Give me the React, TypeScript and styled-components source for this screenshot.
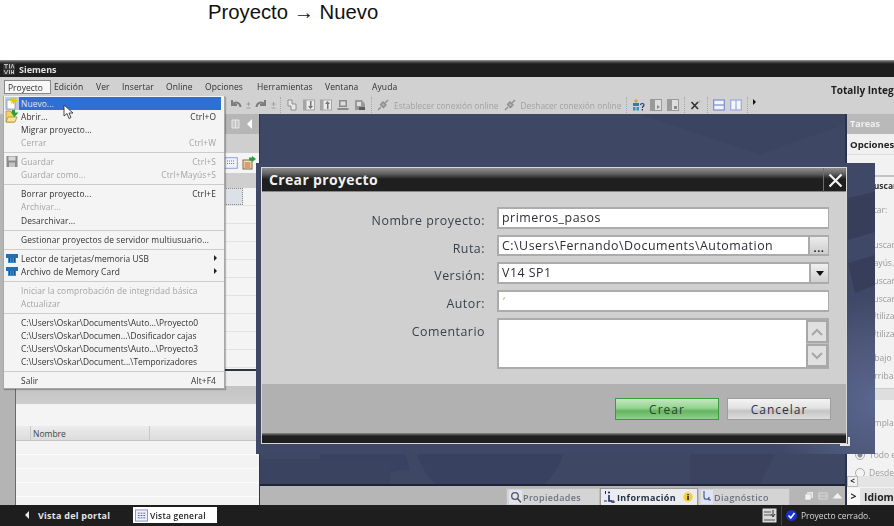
import React from "react";
import styled, { createGlobalStyle } from "styled-components";

const Global = createGlobalStyle`
  html, body { margin: 0; padding: 0; background: #fff; }
  body { width: 894px; height: 526px; overflow: hidden; font-family: "Open Sans", "Noto Sans", sans-serif; }
  * { box-sizing: border-box; }
`;

const Page = styled.div`
  position: relative;
  width: 894px;
  height: 526px;
  overflow: hidden;
  display: flex;
  flex-direction: column;
`;
const Caption = styled.div`
  height: 60px;
  padding: 0 0 0 208px;
  font: 20.3px/24px "Liberation Sans", Arial, sans-serif;
  color: #111;
`;
const Window = styled.div`
  position: relative;
  flex: 1;
  display: flex;
  flex-direction: column;
  min-height: 0;
  filter: blur(0.3px);
`;
const TitleBar = styled.div`
  height: 17px;
  display: flex;
  align-items: center;
  gap: 4px;
  padding: 1px 0 0 3px;
  background: linear-gradient(#9a9a9a 0, #4a4a4a 2px, #1e1e1e 4px, #1e1e1e 100%);
  color: #e2e2e2;
  font-size: 9px;
  font-weight: 700;
`;
const MenuBar = styled.div`
  height: 19px;
  display: flex;
  align-items: center;
  background: #d1d1d1;
  position: relative;
`;
const MenuEntry = styled.div<{ $x: number; $open?: boolean }>`
  position: absolute;
  left: ${(p) => p.$x}px;
  top: 3px;
  height: 14px;
  line-height: 14px;
  padding: 0 ${(p) => (p.$open ? 3 : 0)}px;
  font-size: 8.5px;
  letter-spacing: 0.1px;
  color: #303030;
  ${(p) => p.$open && "background:#f7f7f7;border:1px solid #888;width:47px;line-height:13px;letter-spacing:0;"}
`;
const BrandLine = styled.div`
  position: absolute;
  right: 0;
  top: 6px;
  width: 63px;
  overflow: hidden;
  white-space: nowrap;
  font-size: 10px;
  font-weight: 700;
  color: #1d1d1d;
`;
const ToolBar = styled.div`
  height: 18px;
  display: flex;
  align-items: center;
  gap: 5px;
  padding: 0 0 0 230px;
  background: #d1d1d1;
  color: #a2a2a2;
  font-size: 8.4px;
  white-space: nowrap;
`;
const ToolSep = styled.div`
  width: 1px;
  height: 16px;
  border-left: 1px dotted #a8a8a8;
`;
const ToolArrow = styled.div`
  width: 0;
  height: 0;
  margin: -6px 0 0 0;
  border-left: 3px solid #111;
  border-top: 3px solid transparent;
  border-bottom: 3px solid transparent;
`;
const Workspace = styled.div`
  flex: 1;
  display: flex;
  min-height: 0;
`;
const LeftRail = styled.div`
  width: 16px;
  background: #b4b4b4;
  border-right: 1px solid #6a6a6a;
`;
const LeftPanel = styled.div`
  width: 244px;
  display: flex;
  flex-direction: column;
  border-right: 1px solid #2f364d;
  background: #f3f3f3;
`;
const PanelHead = styled.div`
  height: 20px;
  display: flex;
  align-items: center;
  justify-content: flex-end;
  gap: 7px;
  padding-right: 7px;
  background: #b6b6b6;
`;
const PanelBand = styled.div<{ $h: number; $bg: string }>`
  height: ${(p) => p.$h}px;
  background: ${(p) => p.$bg};
`;
const PanelTools = styled.div`
  height: 20px;
  display: flex;
  align-items: center;
  justify-content: flex-end;
  gap: 4px;
  padding-right: 3px;
  background: #f4f4f4;
`;
const Collapse = styled.div`
  width: 0;
  height: 0;
  border-right: 5px solid #fff;
  border-top: 5px solid transparent;
  border-bottom: 5px solid transparent;
`;
const Tree = styled.div`
  height: 183px;
  background: repeating-linear-gradient(#f4f4f4 0, #f4f4f4 17px, #e2e2e2 17px, #e2e2e2 18px);
  position: relative;
  border-bottom: 2px solid #2f3336;
`;
const TreeSelected = styled.div`
  height: 17px;
  background: #dbe1e6;
  border-top: 1px dotted #8a8a8a;
  border-bottom: 1px dotted #8a8a8a;
  border-right: 1px dotted #8a8a8a;
  margin-right: 16px;
`;
const ColHead = styled.div`
  height: 15px;
  display: flex;
  background: linear-gradient(#ececec, #dcdcdc);
  border-bottom: 1px solid #c4c4c4;
  font-size: 8.5px;
  line-height: 15px;
  color: #444;
`;
const ColCell = styled.div<{ $w: number }>`
  width: ${(p) => p.$w}px;
  padding-left: 2px;
  border-right: 1px solid #c8c8c8;
`;
const ListRows = styled.div`
  flex: 1;
  background: repeating-linear-gradient(#f3f3f3 0, #f3f3f3 13px, #fcfcfc 13px, #fcfcfc 14px);
`;
const Center = styled.div`
  flex: 1;
  display: flex;
  flex-direction: column;
  min-width: 0;
`;
const Canvas = styled.div`
  flex: 1;
  position: relative;
  overflow: hidden;
  background: #3e4764;
  border-bottom: 2px solid #1f2438;
`;
const CanvasArt = styled.svg`
  position: absolute;
  inset: 0;
  width: 100%;
  height: 100%;
`;
const TabBar = styled.div`
  height: 19px;
  display: flex;
  align-items: flex-end;
  padding-left: 246px;
  background: #b6b6b6;
`;
const Tab = styled.div<{ $w: number; $active?: boolean }>`
  width: ${(p) => p.$w}px;
  height: 17px;
  display: flex;
  align-items: center;
  gap: 1px;
  padding-left: 2px;
  background: ${(p) => (p.$active ? "#ececec" : "#d4d4d4")};
  border: 1px solid ${(p) => (p.$active ? "#9a9a9a" : "#bdbdbd")};
  border-bottom: 0;
  font-size: 9px;
  font-weight: ${(p) => (p.$active ? 700 : 600)};
  letter-spacing: 0.35px;
  color: ${(p) => (p.$active ? "#23324a" : "#6d7280")};
  white-space: nowrap;
`;
const TabTools = styled.div`
  display: flex;
  align-items: center;
  gap: 4px;
  padding: 0 0 4px 14px;
`;
const RightPanel = styled.div`
  width: 49px;
  display: flex;
  flex-direction: column;
  background: #f2f2f2;
  border-left: 2px solid #2c324a;
  overflow: hidden;
  white-space: nowrap;
  font-size: 8.5px;
  color: #999;
`;
const TasksHead = styled.div`
  height: 20px;
  padding-left: 3px;
  background: #b9b9b9;
  color: #f0f0f0;
  font-size: 9px;
  font-weight: 700;
  line-height: 19px;
`;
const OptionsHead = styled.div`
  height: 21px;
  padding-left: 3px;
  background: #f0f0f0;
  border-bottom: 1px solid #ddd;
  color: #222;
  font-size: 9.6px;
  font-weight: 700;
  line-height: 22px;
`;
const SearchHead = styled.div`
  margin-top: 20px;
  height: 20px;
  padding-left: 21px;
  border-top: 2px solid #c4c4c4;
  color: #333;
  font-weight: 700;
  line-height: 17px;
`;
const PaneRow = styled.div<{ $h: number; $inset: number; $top?: number }>`
  height: ${(p) => p.$h}px;
  margin-top: ${(p) => p.$top ?? 0}px;
  padding-left: ${(p) => p.$inset}px;
  line-height: ${(p) => p.$h}px;
`;
const PaneBlock = styled.div`
  height: 12px;
  margin-top: 5px;
  background: #dedede;
  border-top: 1px solid #ccc;
`;
const RadioRow = styled.div<{ $h: number }>`
  height: ${(p) => p.$h}px;
  display: flex;
  align-items: flex-start;
  gap: 4px;
  padding: 4px 0 0 8px;
  line-height: 10px;
`;
const Radio = styled.div<{ $on?: boolean }>`
  width: 10px;
  height: 10px;
  flex: none;
  border-radius: 50%;
  border: 1px solid #aaa;
  background: ${(p) => (p.$on ? "radial-gradient(#888 0 2px, #f4f4f4 3px)" : "#f4f4f4")};
`;
const PaneScroll = styled.div`
  height: 11px;
  display: flex;
  background: #e4e4e4;
`;
const ScrollBtn = styled.div`
  width: 11px;
  flex: none;
  border: 1px solid #bbb;
  background: #f2f2f2;
  color: #222;
  font-size: 8px;
  font-weight: 700;
  line-height: 8px;
  text-align: center;
`;
const LangRow = styled.div`
  height: 17px;
  display: flex;
  align-items: center;
  gap: 4px;
  margin-top: 1px;
  background: #e2e2e2;
  color: #222;
  font-size: 10.4px;
  font-weight: 700;
`;
const LangBtn = styled.div`
  width: 13px;
  height: 17px;
  flex: none;
  background: #f7f7f7;
  text-align: center;
  line-height: 16px;
`;
const StatusBar = styled.div`
  height: 21px;
  display: flex;
  align-items: center;
  background: #1e1e1e;
  color: #e4e4e4;
  font-size: 8.5px;
  padding-bottom: 1px;
`;
const PortalLink = styled.div`
  display: flex;
  align-items: center;
  gap: 9px;
  padding-left: 25px;
  width: 133px;
  font-size: 9px;
  font-weight: 700;
  letter-spacing: 0.25px;
`;
const PortalArrow = styled.div`
  width: 0;
  height: 0;
  border-right: 4px solid #e8e8e8;
  border-top: 4px solid transparent;
  border-bottom: 4px solid transparent;
`;
const OverviewBtn = styled.div`
  width: 84px;
  height: 16px;
  display: flex;
  align-items: center;
  gap: 2px;
  padding-left: 2px;
  background: #fff;
  color: #222;
  font-weight: 600;
  letter-spacing: 0.2px;
`;
const StatusRight = styled.div`
  margin-left: auto;
  display: flex;
  align-items: center;
  gap: 4px;
  width: 132px;
  letter-spacing: -0.05px;
  color: #d8d8d8;
`;
const StatusDiv = styled.div`
  width: 1px;
  height: 19px;
  background: #444;
`;
const Menu = styled.div`
  position: absolute;
  left: 3px;
  top: 36px;
  width: 222px;
  height: 293px;
  padding: 1px 3px 0 2px;
  background: #f4f4f4;
  border: 1px solid #a8a8a8;
  border-top: 0;
  box-shadow: 1px 1px 1px rgba(0, 0, 0, 0.25);
  font-size: 8.4px;
  letter-spacing: 0.1px;
  color: #303030;
  white-space: nowrap;
  z-index: 3;
`;
const MenuRow = styled.div<{ $off?: boolean; $hot?: boolean; $path?: boolean }>`
  position: relative;
  height: 13.1px;
  display: flex;
  align-items: center;
  justify-content: space-between;
  padding: 0 5px 0 15px;
  margin-left: ${(p) => (p.$hot ? "13px" : "0")};
  ${(p) => p.$path && "letter-spacing:0;"}
  ${(p) => p.$hot && "padding-left:2px;background:#2f6fd3;color:#dfe8f5;"}
  ${(p) => p.$off && "color:#a3a3a3;"}
`;
const RowIcon = styled.svg<{ $hot?: boolean }>`
  position: absolute;
  left: ${(p) => (p.$hot ? "-14px" : "-1px")};
  top: 0;
  width: 14px;
  height: 13px;
`;
const SubArrow = styled.span`
  width: 0;
  height: 0;
  margin-right: -1px;
  border-left: 3px solid #222;
  border-top: 3px solid transparent;
  border-bottom: 3px solid transparent;
`;
const MenuSep = styled.div`
  height: 1px;
  margin: 3px -3px 1.9px -2px;
  background: #cdcdcd;
`;
const Pointer = styled.svg`
  position: absolute;
  left: 63px;
  top: 44px;
  width: 11px;
  height: 16px;
  z-index: 4;
`;
const Backdrop = styled.div`
  position: absolute;
  left: 256px;
  top: 103px;
  width: 619px;
  height: 291px;
  padding: 4px 0 0 5px;
  background: radial-gradient(circle at 100% 82%, #5b668f 0, #4d5779 60px, #3f4866 105px);
  z-index: 2;
`;
const BackdropArt = styled.svg`
  position: absolute;
  inset: 0;
  width: 100%;
  height: 100%;
`;
const Dialog = styled.div`
  position: relative;
  width: 586px;
  height: 277px;
  display: flex;
  flex-direction: column;
  background: #d0d0d0;
  border: 1px solid #d8d8d8;
`;
const DialogTitle = styled.div`
  height: 24px;
  display: flex;
  justify-content: space-between;
  padding: 2px 0 0 7px;
  background: linear-gradient(#8f8f8f 0, #5e5e5e 6px, #1f1f1f 11px, #1f1f1f 100%);
  border-bottom: 1px solid #888;
  color: #f0f0f0;
  font-size: 14px;
  font-weight: 700;
  letter-spacing: 0.35px;
  line-height: 19px;
`;
const CloseBtn = styled.div`
  width: 23px;
  margin-top: -2px;
  height: 24px;
  display: flex;
  align-items: center;
  justify-content: center;
  border-left: 1px solid #6c6c6c;
`;
const Form = styled.div`
  flex: 1;
  display: grid;
  grid-template-columns: 223px 332px;
  grid-template-rows: 22px 21px 22px 22px 51px;
  column-gap: 12px;
  row-gap: 6px;
  padding-top: 15px;
  font-size: 12.4px;
  letter-spacing: 0.5px;
`;
const Label = styled.div`
  text-align: right;
  color: #3a3f4a;
  line-height: 28px;
`;
const Field = styled.div`
  display: flex;
  justify-content: space-between;
  background: #fff;
  border: 2px solid #ababab;
  border-right-width: 1px;
  padding-left: 3px;
  color: #2d2d38;
  line-height: 18px;
  overflow: hidden;
`;
const Squiggle = styled.span`
  color: #c59a6a;
  font-size: 11px;
  padding-left: 1px;
`;
const DotsBtn = styled.div`
  width: 20px;
  height: 21px;
  margin-top: -2px;
  background: linear-gradient(#f0f0f0, #c9c9c9);
  border-left: 2px solid #ababab;
  color: #222;
  font-size: 11px;
  font-weight: 700;
  line-height: 26px;
  text-align: center;
`;
const DropBtn = styled.div`
  width: 19px;
  display: flex;
  align-items: center;
  justify-content: center;
  background: linear-gradient(#f0f0f0, #cfcfcf);
  border-left: 2px solid #ababab;
`;
const DropArrow = styled.div`
  width: 0;
  height: 0;
  border-top: 5px solid #111;
  border-left: 4px solid transparent;
  border-right: 4px solid transparent;
`;
const CommentBox = styled.div`
  display: flex;
  justify-content: flex-end;
  background: #fff;
  border: 2px solid #ababab;
  border-right-width: 1px;
`;
const ScrollCol = styled.div`
  width: 22px;
  display: flex;
  flex-direction: column;
  justify-content: space-between;
  background: #c2c2c2;
`;
const ScrollArrow = styled.div`
  height: 23px;
  display: flex;
  align-items: center;
  justify-content: center;
  background: #e0e0e0;
  border: 2px solid #a8a8a8;
`;
const Footer = styled.div`
  height: 49px;
  display: flex;
  justify-content: flex-end;
  gap: 8px;
  padding: 14px 15px 0 0;
  background: #b1b1b1;
`;
const Btn = styled.div<{ $primary?: boolean }>`
  width: 104px;
  height: 22px;
  text-align: center;
  font-size: 12px;
  letter-spacing: 1px;
  line-height: 21px;
  color: ${(p) => (p.$primary ? "#26452c" : "#2a3348")};
  border: 1px solid ${(p) => (p.$primary ? "#3c9a3c" : "#9d9d9d")};
  background: ${(p) =>
    p.$primary
      ? "linear-gradient(#c4e8c0 0, #93d48f 45%, #62b560 60%, #8fd08c 100%)"
      : "linear-gradient(#f4f4f4 0, #e2e2e2 45%, #c4c4c4 60%, #dedede 100%)"};
`;
const DialogEdge = styled.div`
  height: 10px;
  background: linear-gradient(#8a8a8a 0, #1f1f1f 3px, #1f1f1f 100%);
`;
const Grip = styled.div`
  position: absolute;
  right: -4px;
  bottom: -3px;
  width: 10px;
  height: 9px;
  border-right: 2px solid #e6e6e6;
  border-bottom: 2px solid #e6e6e6;
`;
const TinySign = styled.svg`
  width: 7px;
  height: 12px;
  margin: 0 -2px;
  flex: none;
`;

const Ic = styled.svg<{ $w?: number; $h?: number }>`
  width: ${(p) => p.$w ?? 12}px;
  height: ${(p) => p.$h ?? 12}px;
  flex: none;
`;

const Undo = ({ flip }: { flip?: boolean }) => (
  <Ic viewBox="0 0 12 12" style={flip ? { transform: "scaleX(-1)" } : undefined}>
    <path d="M2 1v5h5M2.5 5.5C5 2.5 10 3 10.5 8" fill="none" stroke="#7d7d7d" strokeWidth="2" />
  </Ic>
);
const PlusMinus = () => (
  <TinySign viewBox="0 0 7 12">
    <path d="M3.5 3v4M1.5 5h4M1.5 9h4" stroke="#a0a0a0" strokeWidth="1" />
  </TinySign>
);
const Doc = () => (
  <Ic viewBox="0 0 12 12">
    <path d="M2 1h4v4h4v6H5V7H2z" fill="#e8e8e8" stroke="#8f8f8f" />
  </Ic>
);
const ArrowBox = ({ up }: { up?: boolean }) => (
  <Ic viewBox="0 0 12 12">
    <rect x="0.5" y="1" width="11" height="10" fill="#eaeaea" stroke="#a5a5a5" />
    <rect x="0.5" y="1" width="3" height="10" fill="#a5a5a5" />
    <path d={up ? "M7.5 2 5 5h2v5h1.5V5H10z" : "M7.5 10 5 7h2V2h1.5v5H10z"} fill="#777" />
  </Ic>
);
const Screen = () => (
  <Ic viewBox="0 0 12 12">
    <rect x="2" y="1" width="8" height="7" fill="#8b8b8b" />
    <rect x="3.5" y="2.5" width="5" height="4" fill="#dcdcdc" />
    <rect x="0.5" y="9" width="11" height="2" fill="#8b8b8b" />
  </Ic>
);
const Rt = () => (
  <Ic viewBox="0 0 12 12">
    <path d="M1 1h7l3 4v6H1z" fill="#9a9a9a" />
    <path d="M3 3h4v4H3z" fill="#dedede" />
    <path d="M5 8h6v3H5z" fill="#5d5d5d" />
  </Ic>
);
const Plug = () => (
  <Ic viewBox="0 0 12 12">
    <path d="M1 11 4 8M8 4l3-3M3.5 5.5 6.5 8.5 9 6 6 3z" fill="#b0b0b0" stroke="#8d8d8d" strokeWidth="1.3" />
  </Ic>
);
const Persons = () => (
  <Ic $w={13} viewBox="0 0 13 12">
    <circle cx="4" cy="2" r="1.7" fill="#e0a13a" />
    <rect x="1" y="4" width="6" height="3" fill="#2d7fb8" />
    <rect x="1" y="8" width="2.5" height="3.5" fill="#3d8ec8" />
    <rect x="4.5" y="8" width="2.5" height="3.5" fill="#3d8ec8" />
    <path d="M8.5 6c0-2 3.5-2 3.5 0 0 1.3-1.7 1.3-1.7 3" fill="none" stroke="#223b66" strokeWidth="1.2" />
    <rect x="9.7" y="10" width="1.3" height="1.5" fill="#223b66" />
  </Ic>
);
const SplitDoc = ({ sq }: { sq?: boolean }) => (
  <Ic viewBox="0 0 12 12">
    <rect x="0.5" y="0.5" width="11" height="11" fill="#dedede" stroke="#9a9a9a" />
    <rect x="1" y="1" width="4" height="10" fill="#9a9a9a" />
    {sq ? <rect x="7" y="7" width="3" height="3" fill="#8a8a8a" /> : <path d="M7 6l3 2-3 2z" fill="#8a8a8a" />}
  </Ic>
);
const CrossTool = () => (
  <Ic viewBox="0 0 12 12">
    <path d="M1.5 3 8 10M8 3 1.5 10" stroke="#333" strokeWidth="1.6" />
    <path d="M9.5 1v3M8 2.5h3" stroke="#bbb" strokeWidth="1" />
  </Ic>
);
const SplitH = () => (
  <Ic viewBox="0 0 12 12">
    <rect x="0.7" y="1" width="10.6" height="10" fill="#f2f4fb" stroke="#7a8cd2" strokeWidth="1.2" />
    <path d="M1 6h10" stroke="#7a8cd2" strokeWidth="1.2" />
  </Ic>
);
const SplitV = () => (
  <Ic viewBox="0 0 12 12">
    <rect x="0.7" y="1" width="10.6" height="10" fill="#f2f4fb" stroke="#9aa8de" strokeWidth="1.2" />
    <path d="M6 1v10" stroke="#9aa8de" strokeWidth="1.2" />
  </Ic>
);
const Chip = () => (
  <>
    <rect x="1" y="2" width="12" height="4" fill="#1f6fb2" />
    <rect x="3" y="6" width="8" height="5" fill="#3b8fd0" />
    <path d="M4.5 6v4M7 6v4M9.500 6v4" stroke="#0d3f6b" strokeWidth="0.8" />
  </>
);
const TableIcon = () => (
  <Ic $w={13} $h={13} viewBox="0 0 14 13">
    <rect x="0.5" y="0.5" width="13" height="12" fill="#eef1fa" stroke="#7d8fcf" />
    <path d="M3 4h8M3 6.5h8M3 9h8" stroke="#4b5b8c" strokeDasharray="2 1" />
  </Ic>
);
const InfoTab = () => (
  <Ic $w={13} $h={14} viewBox="0 0 13 14">
    <rect x="0.5" y="0.5" width="12" height="13" fill="#e9ecf8" />
    <path d="M6 5v6h3" fill="none" stroke="#1c2b55" strokeWidth="1.6" />
    <circle cx="6" cy="2.5" r="1.1" fill="#1c2b55" />
    <path d="M1 11h3M2.5 1v3M10 10v3M8 12h4" stroke="#1c2b55" />
  </Ic>
);

type Item = { t: string; k?: string; off?: boolean; hot?: boolean; sub?: boolean; icon?: string; path?: boolean };
const menuData: Item[][] = [
  [
    { t: "Nuevo...", hot: true, icon: "new" },
    { t: "Abrir...", k: "Ctrl+O", icon: "open" },
    { t: "Migrar proyecto..." },
    { t: "Cerrar", k: "Ctrl+W", off: true },
  ],
  [
    { t: "Guardar", k: "Ctrl+S", off: true, icon: "save" },
    { t: "Guardar como...", k: "Ctrl+Mayús+S", off: true },
  ],
  [
    { t: "Borrar proyecto...", k: "Ctrl+E" },
    { t: "Archivar...", off: true },
    { t: "Desarchivar..." },
  ],
  [{ t: "Gestionar proyectos de servidor multiusuario..." }],
  [
    { t: "Lector de tarjetas/memoria USB", sub: true, icon: "chip" },
    { t: "Archivo de Memory Card", sub: true, icon: "chip" },
  ],
  [
    { t: "Iniciar la comprobación de integridad básica", off: true },
    { t: "Actualizar", off: true },
  ],
  [
    { t: "C:\\Users\\Oskar\\Documents\\Auto...\\Proyecto0", path: true },
    { t: "C:\\Users\\Oskar\\Documen...\\Dosificador cajas", path: true },
    { t: "C:\\Users\\Oskar\\Documents\\Auto...\\Proyecto3", path: true },
    { t: "C:\\Users\\Oskar\\Document...\\Temporizadores", path: true },
  ],
  [{ t: "Salir", k: "Alt+F4" }],
];

const menuBar: [string, number][] = [
  ["Edición", 54],
  ["Ver", 96],
  ["Insertar", 122],
  ["Online", 166],
  ["Opciones", 205],
  ["Herramientas", 257],
  ["Ventana", 325],
  ["Ayuda", 372],
];

const MenuIconArt = ({ kind }: { kind?: string }) => {
  if (kind === "new")
    return (
      <>
        <rect x="0" y="0" width="14" height="13" fill="#b9cbee" />
        <rect x="2" y="3" width="8" height="9" fill="#fff" stroke="#8a8a8a" strokeWidth="0.7" />
        <path d="M8.500 0v7M5 3.500h7M6 1l5 5M11 1 6 6" stroke="#e0cb10" strokeWidth="1.200" />
      </>
    );
  if (kind === "open")
    return (
      <>
        <path d="M1 1h5l1 2h2v9H1z" fill="#f0d469" stroke="#a88f2a" strokeWidth="0.8" />
        <path d="M1 12l2-5h9l-2 5z" fill="#f7e69c" stroke="#a88f2a" strokeWidth="0.8" />
        <path d="M7 0h3v2.500h3.500L9.500 7 6 2.500h1z" fill="#2d9c3a" />
      </>
    );
  if (kind === "save")
    return (
      <>
        <rect x="1.500" y="1" width="11" height="11" fill="#8c8c8c" />
        <rect x="3.500" y="1.500" width="7" height="4" fill="#d8d8d8" />
        <rect x="4" y="7.500" width="6" height="4.500" fill="#c4c4c4" />
      </>
    );
  return <Chip />;
};

export default function App() {
  return (
    <Page>
      <Global />
      <Caption>Proyecto → Nuevo</Caption>
      <Window>
        <TitleBar>
          <Ic $w={12} $h={12} viewBox="0 0 12 12">
            <rect width="12" height="12" fill="#333" />
            <path d="M1 1.500h4M3 1.500v4M6.500 1v4.500M8 5.500 9.500 1 11 5.500M1 7l2 4 2-4M6.500 7v4M8.500 7v4M8.500 9.500h2.500M10.500 7v4" stroke="#cfcfcf" strokeWidth="0.9" fill="none" />
          </Ic>
          Siemens
        </TitleBar>
        <MenuBar>
          <MenuEntry $x={4} $open>Proyecto</MenuEntry>
          {menuBar.map(([t, x]) => (
            <MenuEntry key={t} $x={x}>{t}</MenuEntry>
          ))}
          <BrandLine>Totally Integrated Automation</BrandLine>
        </MenuBar>
        <ToolBar>
          <Undo />
          <PlusMinus />
          <Undo flip />
          <PlusMinus />
          <ToolSep />
          <Doc />
          <ArrowBox />
          <ArrowBox up />
          <Screen />
          <Rt />
          <ToolSep />
          <Plug />
          Establecer conexión online
          <Plug />
          Deshacer conexión online
          <ToolSep />
          <Persons />
          <SplitDoc />
          <SplitDoc sq />
          <ToolSep />
          <CrossTool />
          <ToolSep />
          <SplitH />
          <SplitV />
          <ToolSep />
          <ToolArrow />
        </ToolBar>
        <Workspace>
          <LeftRail />
          <LeftPanel>
            <PanelHead>
              <Ic $w={9} $h={10} viewBox="0 0 9 10">
                <path d="M1 1h7v8H1zM4.500 1v8" fill="#c8c8c8" stroke="#e6e6e6" />
              </Ic>
              <Collapse />
            </PanelHead>
            <PanelBand $h={19} $bg="#cfcfcf" />
            <PanelTools>
              <Ic $w={14} $h={14} viewBox="0 0 14 14">
                <rect x="0.7" y="1.700" width="12.600" height="10.600" fill="#f1f3fb" stroke="#8fa0dc" />
                <path d="M3 5h8M3 7.500h8" stroke="#777" strokeDasharray="1 1" />
              </Ic>
              <Ic $w={14} $h={14} viewBox="0 0 14 14">
                <rect x="1" y="4" width="9" height="9" fill="#f1e3c0" stroke="#7a6a3a" />
                <path d="M2.500 7h6M2.500 9h6M2.500 11h6" stroke="#c0572e" />
                <path d="M7 1.500h3V0l4 3-4 3V4.500H7z" fill="#2d9c3a" />
              </Ic>
            </PanelTools>
            <PanelBand $h={15} $bg="#cfcfcf" />
            <Tree>
              <TreeSelected />
            </Tree>
            <PanelBand $h={15} $bg="#ededed" />
            <PanelBand $h={18} $bg="linear-gradient(#c4c4c4,#cdcdcd)" />
            <PanelBand $h={22} $bg="#f4f4f4" />
            <ColHead>
              <ColCell $w={15} />
              <ColCell $w={119}>Nombre</ColCell>
            </ColHead>
            <ListRows />
          </LeftPanel>
          <Center>
            <Canvas>
              <CanvasArt viewBox="0 0 585 370" preserveAspectRatio="none">
                <circle cx="230" cy="316" r="77" fill="#394160" />
                <path d="M60 335l50-16 30 6 10 30-90 15z" fill="#394260" />
                <path d="M0 345h130v25H0z" fill="#3a4360" />
                <path d="M430 340l50-15 35 15-15 30h-70z" fill="#3a425f" />
                <path d="M380 0l120 40 85-30V0z" fill="#3b4461" />
              </CanvasArt>
            </Canvas>
            <TabBar>
              <Tab $w={94}>
                <Ic $w={13} $h={14} viewBox="0 0 13 14">
                  <rect width="13" height="14" fill="#dfe4f5" />
                  <circle cx="6" cy="6" r="3.300" fill="none" stroke="#555" strokeWidth="1.300" />
                  <path d="M8.500 8.500 12 12.500" stroke="#555" strokeWidth="1.500" />
                </Ic>
                Propiedades
              </Tab>
              <Tab $w={98} $active>
                <InfoTab />
                Información
                <Ic $w={10} $h={10} viewBox="0 0 10 10" style={{ marginLeft: 6 }}>
                  <circle cx="5" cy="5" r="4.700" fill="#f2cf3b" />
                  <rect x="4.200" y="4" width="1.700" height="4" fill="#333" />
                  <rect x="4.200" y="2" width="1.700" height="1.300" fill="#333" />
                </Ic>
              </Tab>
              <Tab $w={92}>
                <Ic $w={12} $h={14} viewBox="0 0 12 14">
                  <rect width="12" height="14" fill="#dfe4f5" />
                  <path d="M3 1v6c0 3 5 3 5 0M8 7v3h2" fill="none" stroke="#4b5b8c" strokeWidth="1.200" />
                </Ic>
                Diagnóstico
              </Tab>
              <TabTools>
                <Ic $w={10} $h={10} viewBox="0 0 10 10">
                  <path d="M3 1h6v6H3z" fill="#e6e6e6" />
                  <path d="M1 3h6v6H1z" fill="#f2f2f2" stroke="#b6b6b6" strokeWidth="0.6" />
                </Ic>
                <Ic $w={10} $h={10} viewBox="0 0 10 10">
                  <path d="M1 2h8v6H1zM1 5h8" fill="none" stroke="#dadada" />
                </Ic>
                <Ic $w={11} $h={8} viewBox="0 0 11 8">
                  <path d="M5.500 1 10.500 6.500H.5z" fill="#f2f2f2" />
                </Ic>
              </TabTools>
            </TabBar>
          </Center>
          <RightPanel>
            <TasksHead>Tareas</TasksHead>
            <OptionsHead>Opciones</OptionsHead>
            <SearchHead>Buscar</SearchHead>
            <PaneRow $h={30} $inset={11}>Buscar:</PaneRow>
            <PaneRow $h={11} $inset={0} />
            <PaneRow $h={18} $inset={21}>Buscar</PaneRow>
            <PaneRow $h={18} $inset={19}>Mayús.</PaneRow>
            <PaneRow $h={18} $inset={21}>Buscar</PaneRow>
            <PaneRow $h={17} $inset={21}>Buscar</PaneRow>
            <PaneRow $h={18} $inset={23}>Utilizar</PaneRow>
            <PaneRow $h={18} $inset={23}>Utilizar</PaneRow>
            <PaneRow $h={22} $top={4} $inset={22}>Abajo</PaneRow>
            <PaneRow $h={14} $inset={22}>Arriba</PaneRow>
            <PaneBlock />
            <PaneRow $h={46} $inset={12}>Reemplazar</PaneRow>
            <RadioRow $h={18}><Radio $on />Todo el</RadioRow>
            <RadioRow $h={12}><Radio />Desde</RadioRow>
            <PaneScroll><ScrollBtn>&lt;</ScrollBtn></PaneScroll>
            <LangRow><LangBtn>&gt;</LangBtn>Idiomas</LangRow>
          </RightPanel>
        </Workspace>
        <StatusBar>
          <PortalLink>
            <PortalArrow />
            Vista del portal
          </PortalLink>
          <OverviewBtn>
            <TableIcon />
            Vista general
          </OverviewBtn>
          <StatusRight>
            <Ic $w={15} $h={15} viewBox="0 0 15 15">
              <rect x="0.500" y="0.500" width="14" height="14" fill="#d8d8d8" />
              <path d="M2 4h7M2 7h7M2 12h11" stroke="#555" />
              <path d="M11 2v6M9 6l2 3 2-3" fill="none" stroke="#333" />
            </Ic>
            <StatusDiv />
            <Ic $w={11} $h={11} viewBox="0 0 11 11">
              <circle cx="5.500" cy="5.500" r="5.500" fill="#1a2fd0" />
              <path d="M2.500 5.500 4.800 8 8.500 3" fill="none" stroke="#fff" strokeWidth="1.600" />
            </Ic>
            Proyecto cerrado.
          </StatusRight>
        </StatusBar>

        <Menu>
          {menuData.map((group, i) => (
            <React.Fragment key={i}>
              {i > 0 && <MenuSep />}
              {group.map((it) => (
                <MenuRow key={it.t} $off={it.off} $hot={it.hot} $path={it.path}>
                  {it.icon && (
                    <RowIcon $hot={it.hot} viewBox="0 0 14 13">
                      <MenuIconArt kind={it.icon} />
                    </RowIcon>
                  )}
                  <span>{it.t}</span>
                  {it.k && <span>{it.k}</span>}
                  {it.sub && <SubArrow />}
                </MenuRow>
              ))}
            </React.Fragment>
          ))}
        </Menu>
        <Pointer viewBox="0 0 11 16">
          <path d="M1 1v11l3-2.500 2 5 2-1-2-4.500h4z" fill="#fff" stroke="#333" strokeWidth="0.9" />
        </Pointer>

        <Backdrop>
          <BackdropArt viewBox="0 0 619 291" preserveAspectRatio="none">
            <path d="M592 35l27-6v40l-27 8zM592 100l27-8v30l-20 8z" fill="#363e5a" />
          </BackdropArt>
          <Dialog>
            <DialogTitle>
              Crear proyecto
              <CloseBtn>
                <Ic $w={15} $h={15} viewBox="0 0 15 15">
                  <path d="M1.500 1.500l12 12M13.500 1.500l-12 12" stroke="#f4f4f4" strokeWidth="2.200" />
                </Ic>
              </CloseBtn>
            </DialogTitle>
            <Form>
              <Label>Nombre proyecto:</Label>
              <Field>primeros_pasos</Field>
              <Label>Ruta:</Label>
              <Field>
                C:\Users\Fernando\Documents\Automation
                <DotsBtn>...</DotsBtn>
              </Field>
              <Label>Versión:</Label>
              <Field>
                V14 SP1
                <DropBtn><DropArrow /></DropBtn>
              </Field>
              <Label>Autor:</Label>
              <Field><Squiggle>‘</Squiggle></Field>
              <Label>Comentario</Label>
              <CommentBox>
                <ScrollCol>
                  <ScrollArrow>
                    <Ic $w={12} $h={8} viewBox="0 0 12 8">
                      <path d="M1 7l5-5 5 5" fill="none" stroke="#a6a6a6" strokeWidth="2" />
                    </Ic>
                  </ScrollArrow>
                  <ScrollArrow>
                    <Ic $w={12} $h={8} viewBox="0 0 12 8">
                      <path d="M1 1l5 5 5-5" fill="none" stroke="#a6a6a6" strokeWidth="2" />
                    </Ic>
                  </ScrollArrow>
                </ScrollCol>
              </CommentBox>
            </Form>
            <Footer>
              <Btn $primary>Crear</Btn>
              <Btn>Cancelar</Btn>
            </Footer>
            <DialogEdge />
            <Grip />
          </Dialog>
        </Backdrop>
      </Window>
    </Page>
  );
}
